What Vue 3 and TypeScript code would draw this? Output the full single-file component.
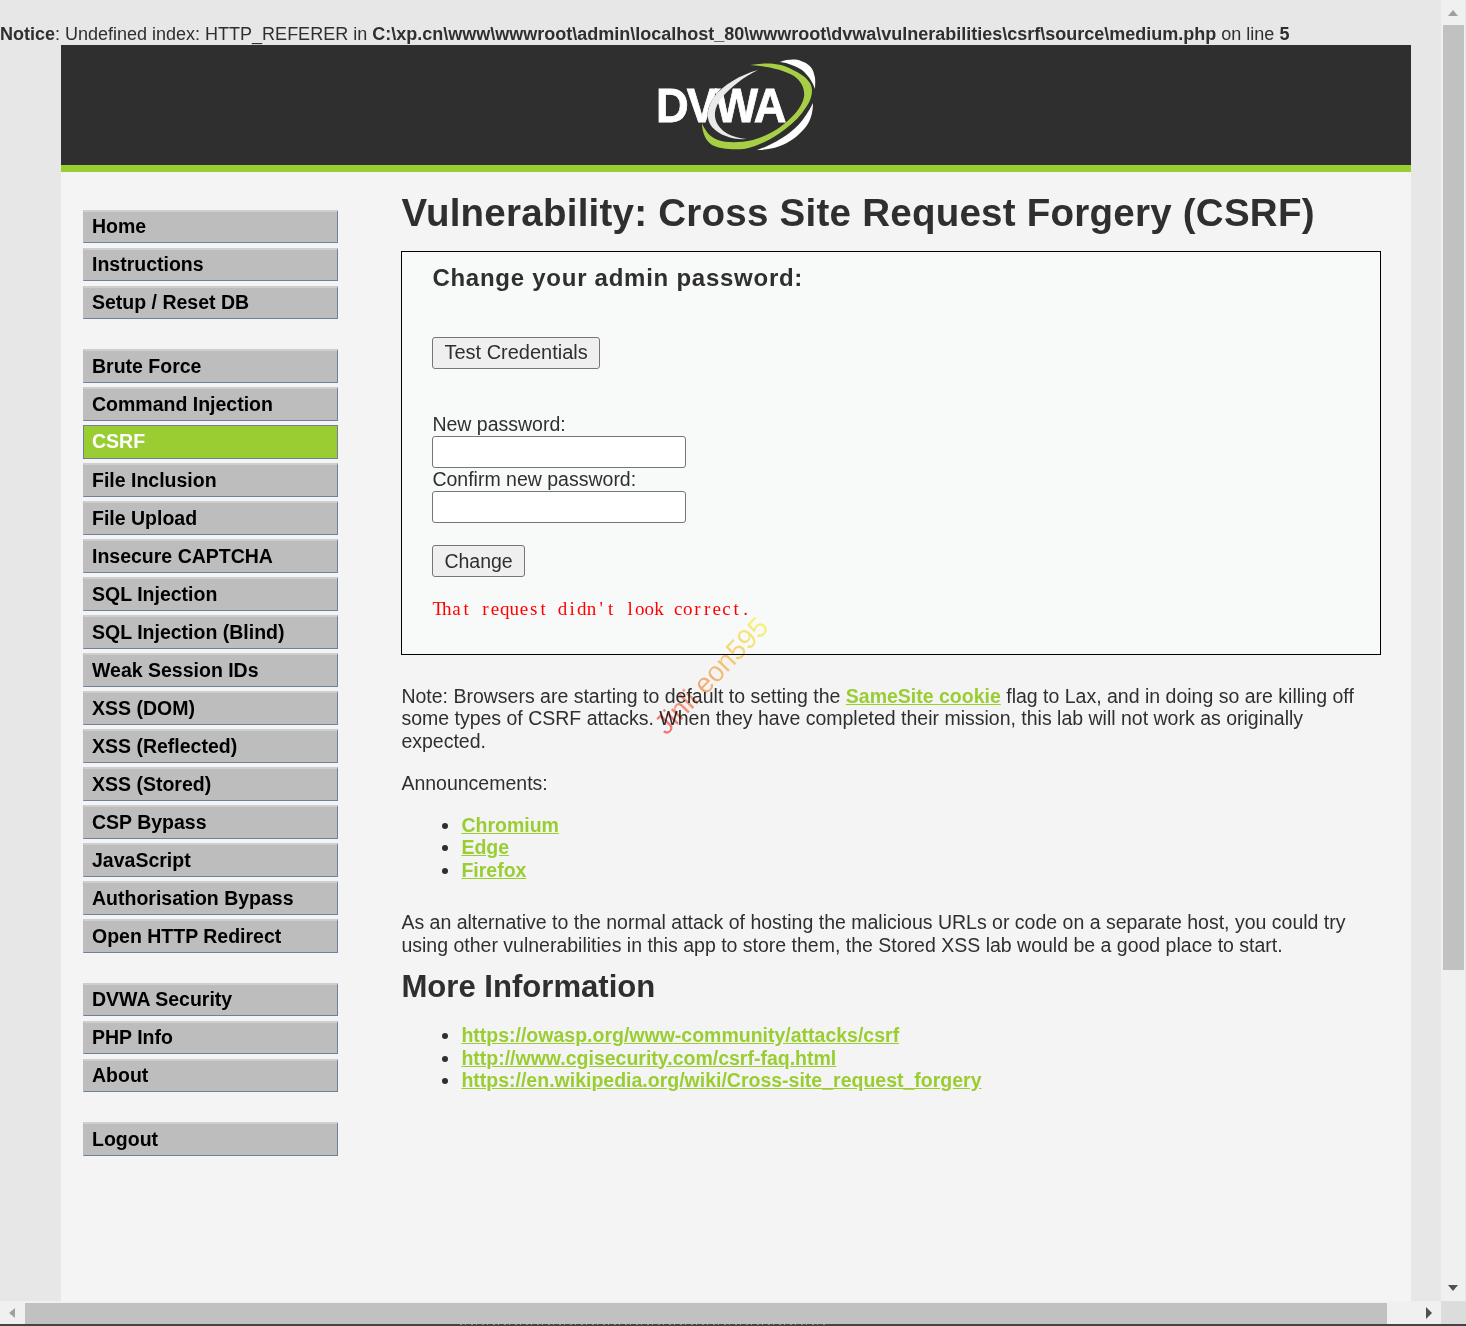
<script setup lang="ts">
const groups: string[][] = [
  ['Home', 'Instructions', 'Setup / Reset DB'],
  ['Brute Force', 'Command Injection', 'CSRF', 'File Inclusion', 'File Upload', 'Insecure CAPTCHA', 'SQL Injection', 'SQL Injection (Blind)', 'Weak Session IDs', 'XSS (DOM)', 'XSS (Reflected)', 'XSS (Stored)', 'CSP Bypass', 'JavaScript', 'Authorisation Bypass', 'Open HTTP Redirect'],
  ['DVWA Security', 'PHP Info', 'About'],
  ['Logout'],
]
const announcements = ['Chromium', 'Edge', 'Firefox']
const links = [
  'https://owasp.org/www-community/attacks/csrf',
  'http://www.cgisecurity.com/csrf-faq.html',
  'https://en.wikipedia.org/wiki/Cross-site_request_forgery',
]
const errorChars = "That request didn't look correct.".split('')
</script>

<template>
  <div class="page">
    <div class="notice"><b>Notice</b>: Undefined index: HTTP_REFERER in <b>C:\xp.cn\www\wwwroot\admin\localhost_80\wwwroot\dvwa\vulnerabilities\csrf\source\medium.php</b> on line <b>5</b></div>
    <div class="container">
      <header class="header">
        <svg class="logo" width="160" height="92" viewBox="0 0 160 92">
          <path d="M94 6 C112 3 126 4 137 11 C150 17 156 24 156 31 C156 40 152 46 146 54 C140 62 132 68 124 74 C112 82 100 88 88 90 C76 91 64 90 56 86 C50 82 46 74 46 64 C49 72 54 78 62 81 C70 84 84 84 97 81 C110 77 120 72 128 65 C138 57 146 48 148 38 C149 30 146 23 138 17 C128 11 112 7 94 6Z" fill="#a6cf45"/>
          <path d="M124 3 C132 0 140 0 145 2 C152 4 157 9 158 15 C160 20 159 25 159 30 C157 24 153 17 146 11 C140 7 132 4 124 3Z" fill="#fff"/>
          <path d="M157 44 C157 54 154 64 148 70 C142 77 134 83 124 87 C116 90 108 91 101 91 C110 88 118 84 126 79 C138 72 148 62 157 44Z" fill="#fff"/>
          <g transform="scale(0.925 1)">
            <text x="0" y="63" class="logo-text">DVWA</text>
          </g>
          <path d="M102 11 C84 17 68 27 60 39 C52 50 52 60 58 68 C65 76 78 80 91 80" fill="none" stroke="#2f2f2f" stroke-width="4"/>
          <path d="M102 11 C84 16 67 26 58 38 C50 50 50 60 56 68 C64 77 78 81 91 80 C78 79 67 74 62 66 C57 58 58 49 65 40 C74 28 88 18 102 11Z" fill="#eaeaea"/>
        </svg>
      </header>
      <div class="stripe"></div>
      <div class="body">
        <nav class="nav">
          <ul v-for="(group, i) in groups" :key="i" class="menu">
            <li v-for="item in group" :key="item" class="menu-item" :class="{ selected: item === 'CSRF' }">{{ item }}</li>
          </ul>
        </nav>
        <main class="main">
          <h1 class="title">Vulnerability: Cross Site Request Forgery (CSRF)</h1>
          <section class="box">
            <h3 class="box-title">Change your admin password:</h3>
            <button class="btn test" type="button">Test Credentials</button>
            <label class="lbl first">New password:</label>
            <input class="field" type="password" />
            <label class="lbl">Confirm new password:</label>
            <input class="field" type="password" />
            <button class="btn change" type="button">Change</button>
            <pre class="err"><span v-for="(c, i) in errorChars" :key="i" class="cell">{{ c }}</span></pre>
          </section>
          <p class="para note">Note: Browsers are starting to default to setting the <a href="#">SameSite cookie</a> flag to Lax, and in doing so are killing off some types of CSRF attacks. When they have completed their mission, this lab will not work as originally expected.</p>
          <p class="para ann">Announcements:</p>
          <ul class="links">
            <li v-for="a in announcements" :key="a"><a href="#">{{ a }}</a></li>
          </ul>
          <p class="para alt">As an alternative to the normal attack of hosting the malicious URLs or code on a separate host, you could try using other vulnerabilities in this app to store them, the Stored XSS lab would be a good place to start.</p>
          <h2 class="more">More Information</h2>
          <ul class="links">
            <li v-for="l in links" :key="l"><a href="#">{{ l }}</a></li>
          </ul>
        </main>
      </div>
    </div>
    <div class="watermark">Jinli eon595</div>
    <div class="vbar">
      <span class="arrow up"></span>
      <div class="vthumb"></div>
      <span class="arrow down"></span>
    </div>
    <div class="hbar">
      <span class="arrow left"></span>
      <div class="hthumb"></div>
      <span class="arrow right"></span>
    </div>
    <div class="corner"></div>
    <div class="edge"><div class="specks"></div></div>
  </div>
</template>

<style>
html, body { margin: 0; overflow: hidden; }
</style>

<style scoped>
.page {
  position: relative;
  width: 1466px;
  height: 1326px;
  overflow: hidden;
  background: #e7e7e7;
  color: #2f2f2f;
  font-family: "Liberation Sans", Arial, sans-serif;
  font-size: 19.5px;
  line-height: 22.5px;
}
.notice { height: 45px; box-sizing: border-box; padding-top: 23px; white-space: nowrap; font-size: 18px; }
.container { margin-left: 61px; width: 1350px; background: #f4f4f4; height: 1281px; }
.header { height: 120px; background: #2f2f2f; display: flex; justify-content: center; align-items: center; }
.logo { display: block; filter: blur(0.4px); }
.logo-text { font: bold 49px "Liberation Sans", sans-serif; fill: #fff; stroke: #fff; stroke-width: 0.8px; letter-spacing: -2px; }
.stripe { height: 7px; background: #9acd32; }
.body { display: flex; }
.nav { width: 255px; margin-left: 22px; padding-top: 38px; flex: none; }
.menu { list-style: none; margin: 0 0 30px; padding: 0; }
.menu-item {
  height: 33px;
  box-sizing: border-box;
  margin-bottom: 5px;
  padding: 3px 0 0 8px;
  background: #bdbdbd;
  border: 1px solid #bdbdbd;
  border-top: 2px solid #cfcfcf;
  border-bottom: 1px solid #70809c;
  border-right: 1px solid #70809c;
  font-weight: bold;
  font-size: 19.5px;
  color: #000;
}
.menu:nth-child(even) .menu-item { height: 34px; margin-bottom: 4px; padding-top: 4px; }
.menu-item.selected { background: #9acd32; color: #fff; border: 1px solid #70809c; padding-top: 5px; }
.main { margin-left: 63.4px; width: 980px; flex: none; }
.title { margin: 18px 0 0; font-size: 38.5px; line-height: 46px; font-weight: bold; letter-spacing: 0.25px; }
.box {
  margin-top: 15px;
  height: 404px;
  box-sizing: border-box;
  border: 1px solid #000;
  background: #f8f9f9;
  padding: 11px 30px 0;
  display: flex;
  flex-direction: column;
  align-items: flex-start;
}
.box-title { margin: 0; font-size: 24px; line-height: 29px; letter-spacing: 0.74px; }
.btn {
  font: 19.5px "Liberation Sans", sans-serif;
  color: #2f2f2f;
  height: 32px;
  padding: 0 11px;
  background: #efefef;
  border: 1px solid #767676;
  border-radius: 3px;
}
.test { margin-top: 45px; font-size: 20px; padding-bottom: 1px; }
.lbl { display: block; height: 23px; line-height: 22px; }
.lbl.first { margin-top: 44px; }
.field { width: 254px; height: 32px; box-sizing: border-box; border: 1px solid #767676; border-radius: 3px; background: #fff; display: block; padding: 0; }
.change { margin-top: 22px; }
.err { margin: 22px 0 0; font: 19px/20px "Liberation Serif", serif; color: #f00; }
.cell { display: inline-block; width: 9.65px; text-align: center; }
.para { margin: 0; }
.note { margin-top: 29.5px; }
.ann { margin-top: 20px; }
.links { margin: 19px 0 0; padding-left: 60px; font-weight: bold; }
.links a, .para a { color: #9acd32; font-weight: bold; }
.alt { margin-top: 30px; }
.more { margin: 12px 0 0; font-size: 31.1px; line-height: 38px; }
.more + .links { margin-top: 18px; }
.watermark {
  position: absolute;
  left: 637px;
  top: 660px;
  transform: rotate(-46deg);
  font-size: 28px;
  line-height: 32px;
  white-space: nowrap;
  background: linear-gradient(90deg, #fa7a7a, #fcc47c 55%, #fbfb78);
  -webkit-background-clip: text;
  background-clip: text;
  color: transparent;
  mix-blend-mode: multiply;
}
.vbar { position: absolute; left: 1441px; top: 0; width: 24px; height: 1301px; background: #f0f0f0; }
.vthumb { position: absolute; left: 2px; right: 1px; top: 25px; height: 945px; background: #c1c1c1; }
.hbar { position: absolute; left: 0; top: 1301px; width: 1441px; height: 23px; background: #f0f0f0; }
.hthumb { position: absolute; left: 25px; top: 2px; width: 1362px; height: 21px; background: #c1c1c1; }
.corner { position: absolute; left: 1441px; top: 1301px; width: 25px; height: 23px; background: #dcdcdc; }
.edge { position: absolute; left: 0; right: 0; top: 1324px; height: 2px; background: #444; }
.specks { margin-left: 460px; width: 368px; height: 1px; background: repeating-linear-gradient(90deg, #8a8a8a 0 2px, #444 2px 5px, #9a9a9a 5px 6px, #444 6px 11px); }
.arrow { position: absolute; width: 0; height: 0; border-style: solid; border-color: transparent; }
.arrow.up { left: 7px; top: 10px; border-width: 0 5.5px 6px; border-bottom-color: #a0a0a0; }
.arrow.down { left: 7px; top: 1285px; border-width: 6px 5.5px 0; border-top-color: #505050; }
.arrow.left { left: 9px; top: 7px; border-width: 5.5px 6px 5.5px 0; border-right-color: #a0a0a0; }
.arrow.right { left: 1426px; top: 6px; border-width: 6px 0 6px 6px; border-left-color: #505050; }
</style>
